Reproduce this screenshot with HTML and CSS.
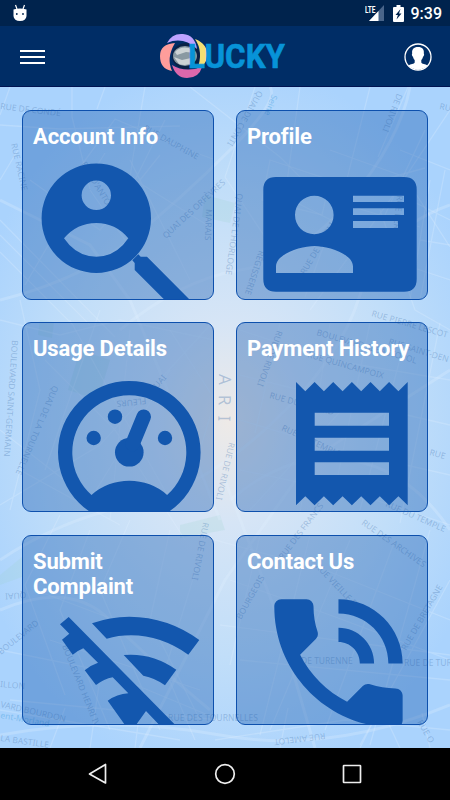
FILE: index.html
```html
<!DOCTYPE html>
<html lang="en">
<head>
    <meta charset="UTF-8">
    <meta name="viewport" content="width=device-width, initial-scale=1.0">
    <title>Lucky</title>
    <link rel="stylesheet" href="styles.css">
</head>
<body>
    <div class="status-bar">
        <svg class="droid" width="14" height="18" viewBox="0 0 14 18">
            <path d="M2.500 1l1.500 4M11.500 1l-1.500 4" stroke="#fff" stroke-width="1.2"/>
            <path d="M.5 5.500Q7 3.500 13.500 5.500V12Q13 17 7 17T.5 12z" fill="#fff"/>
            <circle cx="3.800" cy="10" r=".9" fill="#00234d"/>
            <circle cx="10" cy="10" r=".9" fill="#00234d"/>
        </svg>
        <div class="status-right">
            <svg width="20" height="18" viewBox="0 0 20 18">
                <path d="M19 1v16H4z" fill="#49658a"/>
                <path d="M13.500 7v10H4z" fill="#fff"/>
                <text x="0" y="8.500" class="lte" textLength="10.500" lengthAdjust="spacingAndGlyphs">LTE</text>
            </svg>
            <svg class="battery" width="11" height="17" viewBox="0 0 11 17">
                <path d="M3.500 0h4v2H10q1 0 1 1v13q0 1-1 1H1q-1 0-1-1V3q0-1 1-1h2.500z" fill="#fff"/>
                <path d="M7.500 4L2.500 10h2.400L3.500 14.500 8.500 8.500H6z" fill="#00234d"/>
            </svg>
            <span class="clock">9:39</span>
        </div>
    </div>

    <header class="app-bar">
        <button class="menu-btn" aria-label="Menu">
            <span></span>
            <span></span>
            <span></span>
        </button>
        <svg class="logo" width="130" height="48" viewBox="0 0 130 48">
            <ellipse cx="26" cy="24" rx="14" ry="13" fill="#0a2145"/>
            <ellipse cx="25" cy="24" rx="12" ry="10" fill="#8999a2"/>
            <path d="M15 20q5-6 14-4l6 5-9-1-9 3zM14 25l8 3 9-2 4 2q-6 7-16 4z" fill="#ccd3d5"/>
            <path d="M7 11Q12 1 23 2q12 1 14 15Q23 4 7 11z" fill="#bda2ff"/>
            <path d="M15 11Q0 12 0 24q0 13 12 15Q6 26 15 11z" fill="#ff9d9b"/>
            <path d="M35 7q13 5 12 17-1 10-10 14Q44 20 35 7z" fill="#f4df73"/>
            <path d="M12 33q13 8 30 2-3 11-15 11-11 0-15-13z" fill="#dc67ab"/>
            <text x="28" y="36" class="logo-text" textLength="97" lengthAdjust="spacingAndGlyphs">LUCKY</text>
        </svg>
        <button class="user-btn" aria-label="Profile">
            <svg width="28" height="28" viewBox="0 0 28 28">
                <circle cx="14" cy="14" r="13" fill="none" stroke="#fff" stroke-width="1.300"/>
                <path d="M14 4c-4.500 0-6.300 2.500-5.800 6.500-.8.500 0 3 .8 3.200.4 1.800 1 2.600 1.700 3.300v2.500C10.200 21 6.500 21 4.500 22.500 9 28 19 28 23.500 22.500 21.500 21 17.800 21 17.300 19.500V17c.7-.7 1.300-1.500 1.700-3.300.8-.2 1.600-2.700.8-3.200C20.300 6.500 18.500 4 14 4z" fill="#fff"/>
            </svg>
        </button>
    </header>

    <main class="content">
        <svg class="map" viewBox="0 87 450 661" aria-hidden="true">
            <g class="blocks">
                <path d="M80 350l30 10-12 40-30-10zM205 195l30 8-5 20-28-6zM40 320l14 2-2 16-14-3z"/>
                <path d="M0 575l22-18v20L0 585zM180 525l40-10 5 15-45 8z"/>
            </g>
            <g class="streets-wide">
                <path d="M0 200L30 215 90 245 130 300 180 420 220 520"/>
                <path d="M0 300q80-20 130-60t100-90 40-63"/>
                <path d="M120 330q60-50 120-60t110-70 60-113"/>
                <path d="M0 560q60-40 130-55t140-80 90-130 90-90"/>
                <path d="M0 610q70-30 110 10t100 90"/>
                <path d="M230 500q60-50 120-40t100 70"/>
                <path d="M0 735q110-20 220 0t230-30"/>
                <path d="M225 480l50 130 40 138M450 370L310 460 225 580 140 748"/>
            </g>
            <g class="streets">
                <path d="M0 125l60 4 120-3M10 87l-10 28M72 87v30l18 72M105 87l-8 22M145 87l-12 70-10 70M0 235l90 90M0 220l115 117M0 252l72 72M18 150l-18 30M25 285l35-60 45-72"/>
                <path d="M60 195l55-76 70 30 28 10M30 180l70 50 60-75M90 190l70 100M130 160l60 120M165 120l-30 60 80 50M0 320l60 15 60-15 94 20"/>
                <path d="M190 87l90 70 40 40 100 30M255 87l-30 90 40 60M300 87l-15 110 100 50M330 150l75 27 45 70M345 190l80-22M370 87l-25 100-40 110M380 210l35 100 35 20M450 110l-60 90-80 110"/>
                <path d="M408 87l-30 70M425 130l-40 85M400 150l50 20M390 190l60 30M420 240l30 5M405 265l45 15M430 180l-20 120M445 170l-25 130M270 160l60 20-8 35-60-15z"/>
                <path d="M20 300l20 90-30 120M0 430l90 70 80-130M45 360l70 70 70 110M70 320l100 180M100 310L45 470M130 330l-20 190M0 505l100-60 110-120M170 330l45 70-30 100M20 470l100 55"/>
                <path d="M240 330l90 30 120 20M240 375l80 20 130 30M240 420l100 30 110 25M240 470l120 25 90 30M280 323l-25 110M330 323l-30 190M370 323l-40 190M405 340l-45 170M440 323l-40 200M250 510l110-120"/>
                <path d="M215 540l110 30 125 50M230 580l100 35 120 45M220 625l230 30M240 660l210 20M260 535l-30 130M310 535l-50 200M350 540l-80 190M395 540l-70 190M430 530l-60 215M450 580l-90 165"/>
                <path d="M60 515l-35 70 40 110M90 530l-30 80 50 120M130 520l-30 70 60 140M170 530l-20 90 50 100M205 540l-40 130 30 70M35 590l160 60M50 640l150 50M0 650l100 20 120 50M10 700l210 20"/>
                <path d="M0 710l180 30M50 748l15-40M90 748l10-70M135 748l5-40M215 740l130-20 105 10M360 748l15-30M400 748l-15-32M430 748l-8-35M280 748l8-40"/>
            </g>
            <g class="names">
                <text transform="translate(0 109) rotate(7)">RUE DE CONDÉ</text>
                <text transform="translate(11 144) rotate(77)">RUE RACINE</text>
                <text transform="translate(143 130) rotate(29)">RUE DAUPHINE</text>
                <text transform="translate(81 164) rotate(59)">RUE D'ANTON</text>
                <text transform="translate(166 239) rotate(-43)">QUAI DES ORFÈVRES</text>
                <text transform="translate(206 209) rotate(92)">MARAIS</text>
                <text transform="translate(258 90) rotate(120)">QUAI DE CONTI</text>
                <text class="water" transform="translate(272 94) rotate(111)">Seine</text>
                <text transform="translate(397 93) rotate(111)">DE RIVOLI</text>
                <text transform="translate(439 109) rotate(12)">RU</text>
                <text transform="translate(237 193) rotate(98)">QUAI DE L'HORLOGE</text>
                <text transform="translate(259 250) rotate(108)">RÉGISSERIE</text>
                <text transform="translate(305 275) rotate(-59)">RUE DE RIVOLI</text>
                <text transform="translate(397 195) rotate(96)">RUE BERGER</text>
                <text transform="translate(12 340) rotate(94)">BOULEVARD SAINT-GERMAIN</text>
                <text transform="translate(53 385) rotate(113)">QUAI DE LA TOURNELLE</text>
                <text transform="translate(146 398) rotate(174)">FLEURS</text>
                <text transform="translate(153 394) rotate(-49)">QUAI</text>
                <text transform="translate(371 316) rotate(16)">RUE PIERRE LESCOT</text>
                <text transform="translate(388 344) rotate(17)">RUE SAINT-DEN</text>
                <text transform="translate(316 335) rotate(16)">BOULEVARD SÉBASTOPOL</text>
                <text transform="translate(307 357) rotate(16)">RUE QUINCAMPOIX</text>
                <text transform="translate(269 398) rotate(15)">RUE DU RENARD</text>
                <text transform="translate(281 430) rotate(25)">RUE DU TEMPLE</text>
                <text transform="translate(429 455) rotate(15)">RUE</text>
                <text transform="translate(385 506) rotate(24)">RUE DU TEMPLE</text>
                <text transform="translate(361 524) rotate(35)">RUE DES ARCHIVES</text>
                <text transform="translate(277 330) rotate(110)">RUE DE RIVOLI</text>
                <text transform="translate(229 442) rotate(103)">RUE DE RIVOLI</text>
                <text class="city" transform="translate(219 374) rotate(91)">ARI</text>
                <text transform="translate(26 592) rotate(176)">QUAI</text>
                <text transform="translate(1 655) rotate(-39)">BOULEVARD</text>
                <text transform="translate(62 646) rotate(68)">BOULEVARD HENRI IV</text>
                <text transform="translate(0 687) rotate(5)">ILLON</text>
                <text transform="translate(0 707) rotate(13)">VARD BOURDON</text>
                <text class="water" transform="translate(0 718) rotate(10)">ent-Morland</text>
                <text transform="translate(0 741) rotate(8)">LA BASTILLE</text>
                <text transform="translate(203 522) rotate(101)">RUE DE RIVOLI</text>
                <text transform="translate(168 721)" textLength="90">RUE DES TOURNELLES</text>
                <text transform="translate(325 733) rotate(173)">RUE AMELOT</text>
                <text transform="translate(301 664)">DE TURENNE</text>
                <text transform="translate(404 666)">RUE DE TUR</text>
                <text transform="translate(241 620) rotate(-61)">BOURGEOIS</text>
                <text transform="translate(283 560) rotate(-53)">RUE DES FRANCS</text>
                <text transform="translate(315 567) rotate(46)">RUE VIEILLE DU TEMPLE</text>
                <text transform="translate(406 651) rotate(-60)">RUE DE BRETAGNE</text>
                <text transform="translate(417 722) rotate(60)">RUE O</text>
            </g>
        </svg>

        <div class="cards">
            <a class="card" href="#">
                <h2>Account Info</h2>
                <svg viewBox="1 1 190 188">
                    <path fill-rule="evenodd" d="M19.600 108.300a54.700 54.700 0 1 0 109.400 0a54.700 54.700 0 1 0-109.400 0zM59.600 85.300a14.700 14.700 0 1 1 29.400 0a14.700 14.700 0 1 1-29.400 0zM42 128.300Q55 113 74.300 113t32 15.300Q94 146.700 74.300 146.700T42 128.300z"/>
                    <path d="M116.300 144.300l2.400 2.400h6.300L168 190h-25.300l-30-30v-7l-2.400-2.700z"/>
                </svg>
            </a>
            <a class="card" href="#">
                <h2>Profile</h2>
                <svg viewBox="1 1 190 188">
                    <path fill-rule="evenodd" d="M40 67h128q12.700 0 12.700 12.700V169q0 12.700-12.700 12.700H40Q27.300 181.700 27.300 169V79.700Q27.300 67 40 67zM59 105a19.300 19.300 0 1 1 38.600 0a19.300 19.300 0 1 1-38.600 0zM40 163v-6.500C40 143.700 65.500 136 78.500 136S117 143.700 117 156.500v6.500zM117 85.700h51V92h-51zM117 98.300h51v6.700h-51zM117 111h45v7h-45z"/>
                </svg>
            </a>
            <a class="card" href="#">
                <h2>Usage Details</h2>
                <svg viewBox="1 1 190 188">
                    <path fill-rule="evenodd" d="M36 130.300a71.300 71.300 0 1 0 142.600 0a71.300 71.300 0 1 0-142.600 0zM69.500 173A57 57 0 1 1 145.100 173A57 57 0 0 0 69.500 173z"/>
                    <circle cx="107.300" cy="130.300" r="14.300"/>
                    <circle cx="93" cy="94.700" r="7.200"/>
                    <circle cx="71.700" cy="116" r="7.200"/>
                    <circle cx="143" cy="116" r="7.200"/>
                    <path class="needle" d="M121.700 94.700L110.500 122"/>
                </svg>
            </a>
            <a class="card" href="#">
                <h2>Payment History</h2>
                <svg viewBox="1 1 190 188">
                    <path fill-rule="evenodd" d="M60 60l9.300 9.300L78.600 60l9.300 9.300L97.200 60l9.400 9.300L115.900 60l9.300 9.300L134.500 60l9.300 9.300L153.100 60l9.300 9.300L171.700 60v123.300l-9.300-9-9.300 9-9.300-9-9.300 9-9.300-9-9.300 9-9.300-9-9.400 9-9.300-9-9.300 9-9.300-9-9.300 9zM78.700 90.700H153v13H78.700zM78.700 115.700H153v13H78.700zM78.700 140.300H153V153H78.700z"/>
                </svg>
            </a>
            <a class="card" href="#">
                <h2>Submit<br>Complaint</h2>
                <svg viewBox="1 1 190 188">
                    <path d="M46.700 82L154.300 191H138.300L124 176l-10.700 15H103.700L85.700 165.700Q95 159 106.300 158.300L90.700 142.300Q82 144 74 150L62.700 135.300Q69 130 76 127.700L61.300 113.300Q55 116 50.700 119.700L40 104.700 47.300 98.700 38 89.300z"/>
                    <path d="M70 88.300Q88 81.700 107.300 81.700Q146 82 177.300 105L166.300 119.700Q139 100.300 109 100.300Q96 100.300 84.700 103.700z"/>
                    <path d="M101.700 120Q130 117.500 154.300 134.700L143 150.300Q133 143 121.300 140.700z"/>
                </svg>
            </a>
            <a class="card" href="#">
                <h2>Contact Us</h2>
                <svg viewBox="1 1 190 188">
                    <path transform="translate(16.900 42.900) scale(7.130)" d="M19 12h2c0-4.970-4.030-9-9-9v2c3.870 0 7 3.130 7 7zm-4 0h2c0-2.760-2.240-5-5-5v2c1.660 0 3 1.340 3 3zm5 3.500c-1.250 0-2.450-.2-3.570-.57-.35-.11-.74-.03-1.020.24l-2.200 2.200c-2.830-1.440-5.150-3.750-6.590-6.590l2.200-2.210c.28-.26.36-.65.25-1C8.700 6.450 8.500 5.250 8.500 4c0-.55-.45-1-1-1H4c-.55 0-1 .45-1 1 0 9.390 7.610 17 17 17 .55 0 1-.45 1-1v-3.500c0-.55-.45-1-1-1z"/>
                </svg>
            </a>
        </div>
    </main>

    <nav class="nav-bar">
        <svg viewBox="0 0 24 24"><path d="M19.500 2.500v18.500L3.500 12z"/></svg>
        <svg viewBox="0 0 24 24"><circle cx="12" cy="12" r="9.300"/></svg>
        <svg viewBox="0 0 24 24"><rect x="3.500" y="3.500" width="17" height="17" rx=".5"/></svg>
    </nav>
</body>
</html>
```
FILE: styles.css
```css
* {
    box-sizing: border-box;
}

body {
    margin: 0;
    width: 450px;
    height: 800px;
    display: flex;
    flex-direction: column;
    overflow: hidden;
    font-family: Roboto, sans-serif;
    background: #000;
}

button {
    background: none;
    border: none;
    padding: 0;
}

.status-bar {
    height: 26px;
    padding: 0 8px 0 13px;
    display: flex;
    justify-content: space-between;
    align-items: center;
    background: #00234d;
}

.droid {
    margin-bottom: 1px;
}

.status-right {
    display: flex;
    align-items: center;
}

.lte {
    font-size: 9px;
    font-weight: bold;
    fill: #fff;
}

.battery {
    margin: 0 7px 0 8px;
}

.clock {
    color: #fff;
    font-size: 16px;
    font-weight: 500;
    line-height: 26px;
    padding-top: 2px;
}

.app-bar {
    height: 61px;
    padding: 2px 18px 0 20px;
    display: flex;
    align-items: center;
    justify-content: space-between;
    background: #002d66;
    border-bottom: 1px solid #001352;
}

.menu-btn {
    width: 25px;
    display: grid;
    gap: 4px;
}

.menu-btn span {
    height: 2px;
    background: #fff;
}

.logo {
    margin-bottom: 2px;
}

.logo-text {
    font-size: 34px;
    font-weight: bold;
    fill: #0793d8;
    stroke: #0793d8;
    stroke-width: 0.6;
}

.user-btn svg {
    display: block;
}

.content {
    height: 661px;
    display: grid;
    background: radial-gradient(ellipse 270px 360px at 228px 335px, #eeeae7 0%, #d6e5f6 28%, #c1def9 65%, #aad3fd 100%);
}

.content > * {
    grid-area: 1 / 1;
}

.map {
    width: 450px;
    height: 661px;
}

.blocks {
    fill: rgba(155, 210, 205, 0.2);
}

.streets,
.streets-wide {
    fill: none;
    stroke: rgba(225, 241, 255, 0.27);
    stroke-width: 1.3;
}

.streets-wide {
    stroke-width: 3;
}

.names {
    font-family: "Noto Sans", sans-serif;
    font-size: 8.5px;
    fill: rgba(75, 120, 175, 0.36);
}

.names .water {
    fill: rgba(80, 165, 225, 0.5);
}

.names .city {
    font-size: 17px;
    letter-spacing: 10px;
}

.cards {
    padding: 23px 22px;
    display: grid;
    grid-template-columns: 192px 192px;
    grid-template-rows: 190px 191px 190px;
    gap: 22px;
}

.card {
    height: 190px;
    display: grid;
    border: 1px solid #0d50ad;
    border-radius: 9px;
    overflow: hidden;
    background: rgba(17, 83, 172, 0.37);
    color: #fff;
    text-decoration: none;
}

.card > * {
    grid-area: 1 / 1;
}

.card h2 {
    margin: 13px 10px;
    z-index: 1;
    font-size: 22px;
    font-weight: bold;
    letter-spacing: -0.15px;
    line-height: 25px;
}

.card svg {
    width: 190px;
    height: 188px;
    fill: #1357ae;
}

.needle {
    stroke: #1357ae;
    stroke-width: 14.5;
    stroke-linecap: round;
}

.nav-bar {
    height: 52px;
    padding: 0 86px;
    display: flex;
    align-items: center;
    justify-content: space-between;
    background: #000;
}

.nav-bar svg {
    width: 24px;
    height: 24px;
    fill: none;
    stroke: #eee;
    stroke-width: 1.7;
    stroke-linejoin: round;
}
```
